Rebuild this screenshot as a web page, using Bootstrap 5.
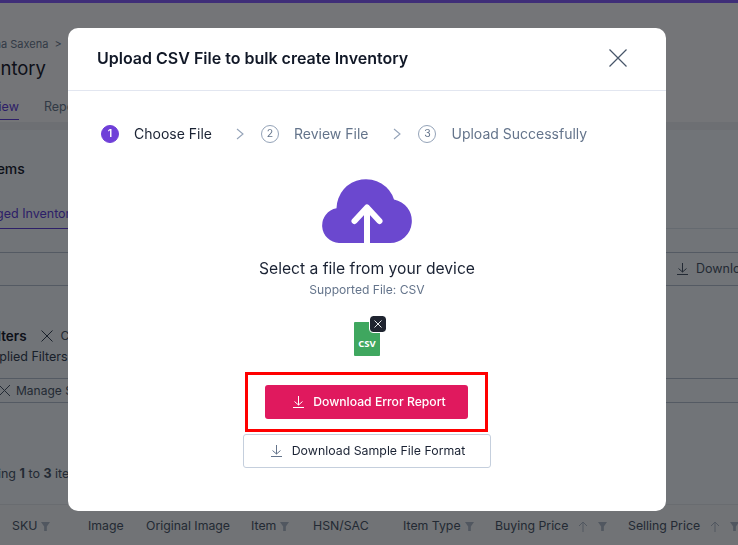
<!DOCTYPE html>
<html lang="en">
<head>
  <meta charset="UTF-8" />
  <meta name="viewport" content="width=device-width, initial-scale=1.0"/>
  <title>Inventory</title>
  <link href="https://cdn.jsdelivr.net/npm/bootstrap@5.3.3/dist/css/bootstrap.min.css" rel="stylesheet">
  <style>
    html, body { height: 545px; overflow: hidden; }
    body { font-family: Inter, "Noto Sans", sans-serif; background: #e2e8f0; color: #1a2233; }
    svg { flex: none; }

    /* page behind the modal */
    .top-strip { height: 3px; background: #7e5cf0; }
    .page-head { height: 119px; background: #e9ebf1; padding: 33px 0 0; }
    .crumb { font-size: 11px; color: #64748b; margin-left: -36px; line-height: 16px; }
    .page-title { font-size: 18.5px; font-weight: 400; margin: 3px 0 0 -36px; line-height: 26px; color: #1a2233; }
    .page-tabs { margin-top: 17px; margin-left: -37px; font-size: 12.5px; color: #64748b; gap: 25px; }
    .page-tabs span { padding-bottom: 4px; line-height: 17px; }
    .page-tabs .on { color: #5b3fd0; border-bottom: 1px solid #5b3fd0; }
    .head-shadow { height: 8px; background: #dbdfe6; }
    .items-title { font-size: 14px; font-weight: 500; margin: 30px 0 0 -12px; line-height: 18px; }
    .sub-tab { display: inline-block; margin: 27px 0 0 -38px; padding-bottom: 5px; font-size: 12.5px; line-height: 18px; width: 106px; white-space: nowrap; color: #5b3fd0; border-bottom: 1px solid #5b3fd0; }
    .rule-a { height: 1px; background: #cbd5e1; margin-top: -1px; }
    .dl-row { height: 34px; margin-top: 23px; border-top: 1px solid #a9b4c6; border-bottom: 1px solid #a9b4c6; padding-left: 677px; font-size: 12.5px; color: #475569; gap: 8px; white-space: nowrap; }
    .filter-row { margin: 40px 0 0 -14px; font-size: 13.5px; font-weight: 600; line-height: 20px; gap: 14px; }
    .filter-row .clear { font-weight: 400; font-size: 12px; color: #475569; margin-left: -6px; }
    .applied { margin: 1px 0 0 -17px; font-size: 12.5px; color: #334155; line-height: 20px; }
    .manage-row { height: 25px; margin-top: 11px; border-top: 1px solid #a9b4c6; border-bottom: 1px solid #a9b4c6; font-size: 12px; color: #475569; gap: 6px; white-space: nowrap; }
    .showing { margin: 61px 0 0 -35px; font-size: 12.5px; color: #475569; line-height: 20px; white-space: nowrap; }
    .grid-head { margin-top: 20px; height: 42px; padding-top: 1px; background: #e2e6ec; border-top: 1px solid #d3d8e0; font-size: 12.3px; color: #475569; white-space: nowrap; }
    .grid-head > div { flex: none; gap: 4px; }
    .c1 { width: 88px; padding-left: 12px; }
    .c2 { width: 58px; }
    .c3 { width: 105px; }
    .c4 { width: 62px; }
    .c5 { width: 90px; }
    .c6 { width: 92px; }
    .c7 { width: 133px; gap: 10px !important; }
    .c8 { width: 120px; gap: 10px !important; }
    .funnel { width: 9px; height: 9px; fill: #a3afc0; }
    .arrow-up { width: 10px; height: 11px; stroke: #a3afc0; fill: none; }

    /* modal */
    .upload-dialog { width: 598px; max-width: 598px; margin: 28px 0 0 68px; }
    .upload-dialog .modal-content { height: 483px; border: 0; border-radius: 10px; }
    .upload-dialog .modal-header { height: 63px; padding: 0 38px 2px 29px; border-bottom: 1px solid #e2e6f0; }
    .upload-dialog .modal-title { font-size: 16px; font-weight: 600; color: #111827; }
    .close-x { width: 20px; height: 20px; padding: 0; border: 0; background: none; line-height: 0; }
    .upload-dialog .modal-body { padding: 0; }
    .stepper { padding: 33px 0 0 33px; height: 63px; font-size: 14px; line-height: 20px; color: #64748b; }
    .step-num { width: 18px; height: 18px; border-radius: 50%; border: 1px solid #94a3b8; font-size: 10.5px; flex: none; color: #64748b; }
    .step-num.on { background: #6f3fd8; border-color: #6f3fd8; color: #fff; font-weight: 600; }
    .step-label { margin-left: 15px; white-space: nowrap; }
    .step-label.on { color: #1a2233; }
    .step-sep { flex: none; width: 8px; height: 12px; margin: 0 17px 0 24px; }
    .step-sep.next { margin-left: 25px; }
    .cloud-art { display: block; width: 92px; height: 64px; margin: 25px auto 0; }
    .select-text { font-size: 15.65px; line-height: 20px; margin-top: 16px; color: #1a2233; }
    .supported { font-size: 12.1px; line-height: 16px; margin-top: 3px; color: #64748b; }
    .csv-holder { position: relative; width: 26px; height: 34px; margin: 24px auto 0; background: #3fa75f; border-radius: 1px; color: #fff; font-size: 9.5px; font-weight: 700; text-align: center; padding-top: 16px; line-height: 12px; font-family: "Open Sans", sans-serif; }
    .csv-remove { position: absolute; top: -6px; right: -6px; width: 16px; height: 16px; background: #1f2430; border-radius: 3px; outline: 1px solid #fff; display: flex; align-items: center; justify-content: center; }
    .error-frame { width: 243px; height: 60px; margin: 16px 0 0 177px; border: 3px solid #f00; padding: 10px 17px; }
    .btn-error { width: 203px; height: 34px; padding: 0 0 0 6px; background: #e0195e; border: 0; border-radius: 3px; color: #fff; font-size: 12.2px; font-weight: 500; gap: 9px; }
    .btn-sample { width: 248px; height: 34px; margin: 2px 0 0 175px; padding: 0 0 0 2px; background: #fff; border: 1px solid #c5cfdd; border-radius: 3px; color: #1a2233; font-size: 12.35px; font-weight: 400; gap: 10px; }
  </style>
</head>
<body>

  <!-- Page behind the modal -->
  <div class="top-strip"></div>
  <div class="page-head">
    <div class="crumb">Archana Saxena &nbsp;&gt;</div>
    <div class="page-title">Inventory</div>
    <div class="page-tabs d-flex">
      <span class="on">Overview</span>
      <span>Reports</span>
    </div>
  </div>
  <div class="head-shadow"></div>

  <div class="items-title">Items</div>
  <div class="sub-tab">Damaged Inventory</div>
  <div class="rule-a"></div>

  <div class="dl-row d-flex align-items-center">
    <svg width="11" height="12" viewBox="0 0 11 12" fill="none" stroke="#475569"><path d="M5.500 0v9M1.500 5.500l4 3.500 4-3.500M0 11.500h11"/></svg>
    <span>Download</span>
  </div>

  <div class="filter-row d-flex align-items-center">
    <span>Filters</span>
    <svg width="12" height="12" viewBox="0 0 12 12" stroke="#334155" fill="none"><path d="M.5.500l11 11M11.500.500l-11 11"/></svg>
    <span class="clear">Clear</span>
  </div>
  <div class="applied">Applied Filters</div>

  <div class="manage-row d-flex align-items-center">
    <svg width="10" height="11" viewBox="0 0 10 11" stroke="#475569" fill="none"><path d="M-1 0l11 11M10 0L-1 11"/></svg>
    <span>Manage Stock</span>
  </div>

  <div class="showing">Showing <b>1</b> to <b>3</b> items</div>

  <div class="grid-head d-flex align-items-center">
    <div class="c1 d-flex align-items-center">SKU <svg class="funnel" viewBox="0 0 10 10"><path d="M0 0h10L6.500 5v5h-3V5z"/></svg></div>
    <div class="c2">Image</div>
    <div class="c3">Original Image</div>
    <div class="c4 d-flex align-items-center">Item <svg class="funnel" viewBox="0 0 10 10"><path d="M0 0h10L6.500 5v5h-3V5z"/></svg></div>
    <div class="c5">HSN/SAC</div>
    <div class="c6 d-flex align-items-center">Item Type <svg class="funnel" viewBox="0 0 10 10"><path d="M0 0h10L6.500 5v5h-3V5z"/></svg></div>
    <div class="c7 d-flex align-items-center">Buying Price <svg class="arrow-up" viewBox="0 0 10 11"><path d="M5 11V1M1 5l4-4 4 4"/></svg><svg class="funnel" viewBox="0 0 10 10"><path d="M0 0h10L6.500 5v5h-3V5z"/></svg></div>
    <div class="c8 d-flex align-items-center">Selling Price <svg class="arrow-up" viewBox="0 0 10 11"><path d="M5 11V1M1 5l4-4 4 4"/></svg><svg class="funnel" viewBox="0 0 10 10"><path d="M0 0h10L6.500 5v5h-3V5z"/></svg></div>
  </div>

  <div class="modal-backdrop show"></div>

  <!-- Upload modal -->
  <div class="modal d-block" tabindex="-1">
    <div class="modal-dialog upload-dialog">
      <div class="modal-content">
        <div class="modal-header">
          <h5 class="modal-title">Upload CSV File to bulk create Inventory</h5>
          <button type="button" class="close-x ms-auto" aria-label="Close">
            <svg width="20" height="20" viewBox="0 0 20 20" fill="none" stroke="#475569" stroke-width="1.200"><path d="M1.500 1.500l17 17M18.500 1.500l-17 17"/></svg>
          </button>
        </div>
        <div class="modal-body">
          <div class="stepper d-flex align-items-start">
            <div class="d-flex align-items-center">
              <span class="step-num on d-flex align-items-center justify-content-center">1</span>
              <span class="step-label on">Choose File</span>
            </div>
            <svg class="step-sep mt-1" viewBox="0 0 8 12" fill="none" stroke="#94a3b8" stroke-width="1.100"><path d="M1 1l6 5-6 5"/></svg>
            <div class="d-flex align-items-center">
              <span class="step-num d-flex align-items-center justify-content-center">2</span>
              <span class="step-label">Review File</span>
            </div>
            <svg class="step-sep next mt-1" viewBox="0 0 8 12" fill="none" stroke="#94a3b8" stroke-width="1.100"><path d="M1 1l6 5-6 5"/></svg>
            <div class="d-flex align-items-center">
              <span class="step-num d-flex align-items-center justify-content-center">3</span>
              <span class="step-label">Upload Successfully</span>
            </div>
          </div>

          <svg class="cloud-art" viewBox="0 0 92 64">
            <path fill="#6b48cf" d="M18 64A17.500 17.500 0 0 1 15.500 29.300 29.500 29.500 0 0 1 73 20.400 22 22 0 0 1 69 64z"/>
            <path fill="none" stroke="#fff" stroke-width="6" stroke-linecap="round" stroke-linejoin="round" d="M33.500 42l12.500-13.500 12.500 13.500"/>
            <path fill="none" stroke="#fff" stroke-width="6" d="M46 30v34"/>
          </svg>

          <div class="select-text text-center">Select a file from your device</div>
          <div class="supported text-center">Supported File: CSV</div>

          <div class="csv-holder">
            CSV
            <span class="csv-remove">
              <svg width="8" height="8" viewBox="0 0 8 8" stroke="#e5e7eb" fill="none"><path d="M.5.500l7 7M7.500.500l-7 7"/></svg>
            </span>
          </div>

          <div class="error-frame">
            <button type="button" class="btn btn-error d-flex align-items-center justify-content-center">
              <svg width="11" height="12" viewBox="0 0 11 12" fill="none" stroke="#fff"><path d="M5.500 0v9M1.500 5.500l4 3.500 4-3.500M0 11.500h11"/></svg>
              Download Error Report
            </button>
          </div>
          <button type="button" class="btn btn-sample d-flex align-items-center justify-content-center">
            <svg width="11" height="12" viewBox="0 0 11 12" fill="none" stroke="#64748b"><path d="M5.500 0v9M1.500 5.500l4 3.500 4-3.500M0 11.500h11"/></svg>
            Download Sample File Format
          </button>
        </div>
      </div>
    </div>
  </div>

  <script src="https://cdn.jsdelivr.net/npm/bootstrap@5.3.3/dist/js/bootstrap.bundle.min.js"></script>
</body>
</html>
